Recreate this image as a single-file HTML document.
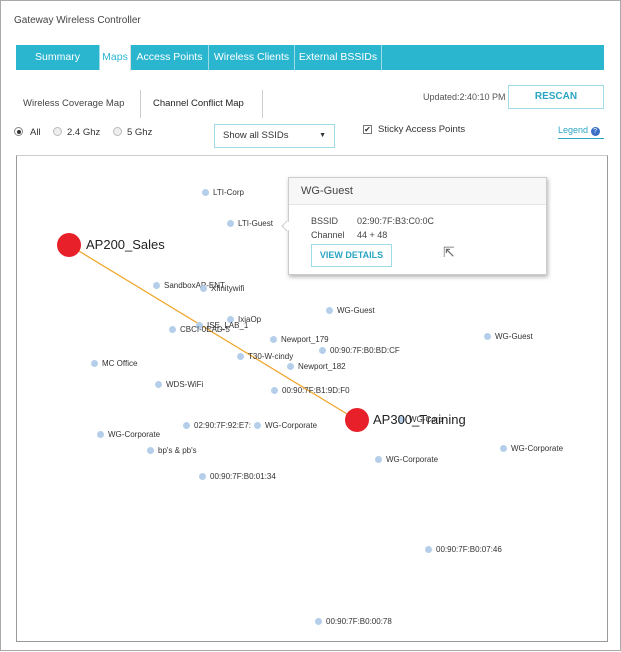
<!DOCTYPE html>
<html><head><meta charset="utf-8"><style>
*{margin:0;padding:0;box-sizing:border-box}
body{width:621px;height:652px;background:#fff;font-family:"Liberation Sans",sans-serif;position:relative;overflow:hidden;color:#333}
.frame{position:absolute;left:0;top:0;width:621px;height:651px;border:1px solid #aaa}
.a{position:absolute;white-space:nowrap}
.tabs{position:absolute;left:16px;top:45px;width:588px;height:25px;background:#2bb6d0}
.tab{position:absolute;top:0;height:25px;line-height:25px;color:#fff;font-size:10.5px;text-align:center;border-right:1px solid #9ddbe7}
.map{position:absolute;left:16px;top:155px;width:592px;height:487px;border:1px solid #999;border-top-color:#ccc}
.n{position:absolute;font-size:8px;color:#333;white-space:nowrap;line-height:10px}
.n i{position:absolute;left:-11px;top:1px;width:7px;height:7px;border-radius:50%;background:#b5cfea}
</style></head><body>
<div class="frame"></div>
<div class="a" style="left:14px;top:15px;font-size:10px;color:#444">Gateway Wireless Controller</div>
<div class="tabs">
<div class="tab" style="left:0;width:84px">Summary</div>
<div class="tab" style="left:84px;width:31px;background:#fff;color:#2bb6d0;height:26px;border-right:1px solid #ddd">Maps</div>
<div class="tab" style="left:115px;width:78px">Access Points</div>
<div class="tab" style="left:193px;width:86px">Wireless Clients</div>
<div class="tab" style="left:279px;width:87px">External BSSIDs</div>
</div>
<div class="a" style="left:23px;top:98px;font-size:9.5px;color:#444">Wireless Coverage Map</div>
<div class="a" style="left:140px;top:90px;width:1px;height:28px;background:#ccc"></div>
<div class="a" style="left:153px;top:98px;font-size:9.5px;color:#222">Channel Conflict Map</div>
<div class="a" style="left:262px;top:90px;width:1px;height:28px;background:#ccc"></div>
<div class="a" style="left:423px;top:92px;font-size:9px;color:#555">Updated:2:40:10 PM</div>
<div class="a" style="left:508px;top:85px;width:96px;height:24px;border:1px solid #9fdbe7;color:#2aa5c2;font-weight:bold;font-size:10px;text-align:center;line-height:22px">RESCAN</div>
<div class="a" style="left:14px;top:127px;width:9px;height:9px;border:1px solid #888;border-radius:50%"><div style="margin:1.5px;width:4px;height:4px;border-radius:50%;background:#333"></div></div>
<div class="a" style="left:30px;top:127px;font-size:9.5px">All</div>
<div class="a" style="left:53px;top:127px;width:9px;height:9px;border:1px solid #bbb;border-radius:50%;background:#eee"></div>
<div class="a" style="left:67px;top:127px;font-size:9.5px">2.4 Ghz</div>
<div class="a" style="left:113px;top:127px;width:9px;height:9px;border:1px solid #bbb;border-radius:50%;background:#eee"></div>
<div class="a" style="left:127px;top:127px;font-size:9.5px">5 Ghz</div>
<div class="a" style="left:214px;top:124px;width:121px;height:24px;border:1px solid #9fdbe7;font-size:9.5px;line-height:22px;padding-left:8px">Show all SSIDs<span style="position:absolute;right:8px;font-size:7px">▼</span></div>
<div class="a" style="left:363px;top:125px;width:9px;height:9px;border:1px solid #777;font-size:8px;line-height:8px;text-align:center">✔</div>
<div class="a" style="left:378px;top:124px;font-size:9.5px">Sticky Access Points</div>
<div class="a" style="left:558px;top:125px;font-size:9px;color:#2aa5c2;border-bottom:1px solid #2aa5c2;padding-bottom:2px;width:46px">Legend <span style="display:inline-block;width:9px;height:9px;border-radius:50%;background:#3a6fc4;color:#fff;font-size:7px;text-align:center;line-height:9px">?</span></div>
<div class="map"></div>
<svg class="a" style="left:0;top:0" width="621" height="652"><line x1="69" y1="245" x2="357" y2="420" stroke="#f0a830" stroke-width="1.3"/>
<circle cx="69" cy="245" r="12" fill="#e8202a"/><circle cx="357" cy="420" r="12" fill="#e8202a"/></svg>
<div class="a" style="left:86px;top:237px;font-size:13px;color:#222">AP200_Sales</div>
<div class="n" style="left:213px;top:188px"><i></i>LTI-Corp</div>
<div class="n" style="left:238px;top:219px"><i></i>LTI-Guest</div>
<div class="n" style="left:164px;top:281px"><i></i>SandboxAP-ENT</div>
<div class="n" style="left:211px;top:284px"><i></i>Xfinitywifi</div>
<div class="n" style="left:238px;top:315px"><i></i>IxiaOp</div>
<div class="n" style="left:207px;top:321px"><i></i>ISE_LAB_1</div>
<div class="n" style="left:180px;top:325px"><i></i>CBCI-0EAD-5</div>
<div class="n" style="left:281px;top:335px"><i></i>Newport_179</div>
<div class="n" style="left:330px;top:346px"><i></i>00:90:7F:B0:BD:CF</div>
<div class="n" style="left:248px;top:352px"><i></i>T30-W-cindy</div>
<div class="n" style="left:298px;top:362px"><i></i>Newport_182</div>
<div class="n" style="left:102px;top:359px"><i></i>MC Office</div>
<div class="n" style="left:166px;top:380px"><i></i>WDS-WiFi</div>
<div class="n" style="left:282px;top:386px"><i></i>00:90:7F:B1:9D:F0</div>
<div class="n" style="left:337px;top:306px"><i></i>WG-Guest</div>
<div class="n" style="left:495px;top:332px"><i></i>WG-Guest</div>
<div class="n" style="left:194px;top:421px"><i></i>02:90:7F:92:E7:</div>
<div class="n" style="left:265px;top:421px"><i></i>WG-Corporate</div>
<div class="n" style="left:108px;top:430px"><i></i>WG-Corporate</div>
<div class="n" style="left:158px;top:446px"><i></i>bp's &amp; pb's</div>
<div class="n" style="left:409px;top:415px"><i></i>WG-Corp</div>
<div class="n" style="left:386px;top:455px"><i></i>WG-Corporate</div>
<div class="n" style="left:511px;top:444px"><i></i>WG-Corporate</div>
<div class="n" style="left:210px;top:472px"><i></i>00:90:7F:B0:01:34</div>
<div class="n" style="left:436px;top:545px"><i></i>00:90:7F:B0:07:46</div>
<div class="n" style="left:326px;top:617px"><i></i>00:90:7F:B0:00:78</div>
<div class="a" style="left:373px;top:412px;font-size:13px;color:#222">AP300_Training</div>
<div class="a" style="left:288px;top:177px;width:259px;height:98px;background:#fff;border:1px solid #ccc;box-shadow:1px 2px 4px rgba(0,0,0,.3)">
<div style="height:27px;background:#f7f7f7;border-bottom:1px solid #e5e5e5;font-size:11px;line-height:27px;padding-left:12px;color:#444">WG-Guest</div>
<div class="a" style="left:22px;top:38px;font-size:9px;color:#444">BSSID</div>
<div class="a" style="left:68px;top:38px;font-size:9px;color:#444">02:90:7F:B3:C0:0C</div>
<div class="a" style="left:22px;top:52px;font-size:9px;color:#444">Channel</div>
<div class="a" style="left:68px;top:52px;font-size:9px;color:#444">44 + 48</div>
<div class="a" style="left:22px;top:66px;width:81px;height:23px;border:1px solid #9fdbe7;color:#2aa5c2;font-weight:bold;font-size:9px;text-align:center;line-height:21px">VIEW DETAILS</div>
<div class="a" style="left:154px;top:66px;font-size:14px;color:#666">⇱</div>
</div>
<div class="a" style="left:283px;top:222px;width:8px;height:8px;background:#fff;border-left:1px solid #ccc;border-bottom:1px solid #ccc;transform:rotate(45deg)"></div>
</body></html>
